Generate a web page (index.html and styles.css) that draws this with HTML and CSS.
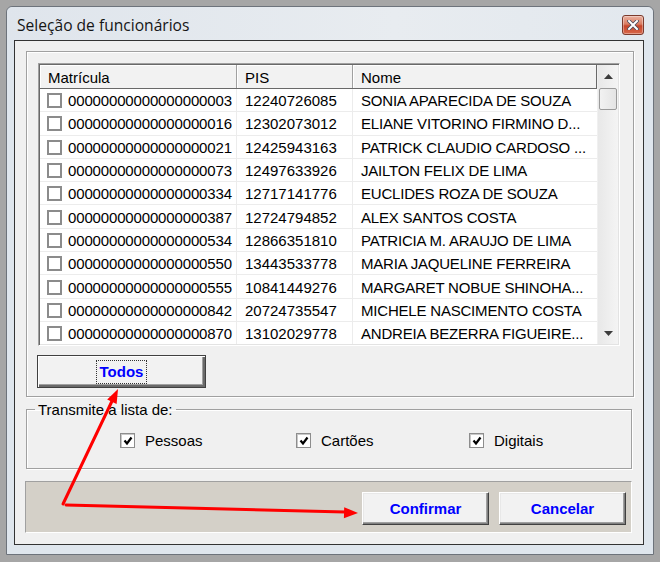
FILE: index.html
```html
<!DOCTYPE html>
<html lang="pt-BR">
<head>
<meta charset="utf-8">
<title>Seleção de funcionários</title>
<link rel="stylesheet" href="styles.css">
</head>
<body>
<div class="window">
  <div class="titlebar">
    <span class="title">Seleção de funcionários</span>
    <span class="close">
      <svg width="12" height="10" viewBox="0 0 12 10"><path d="M2 1 L10 9 M10 1 L2 9" stroke="#4a4a5a" stroke-width="3.6" stroke-linecap="square"/><path d="M2 1 L10 9 M10 1 L2 9" stroke="#ffffff" stroke-width="2" stroke-linecap="square"/></svg>
    </span>
  </div>
  <div class="client">
    <div class="group1">
      <div class="listview">
        <div class="list-main">
          <div class="lv-header">
            <div class="hcell c1">Matrícula</div>
            <div class="hcell c2">PIS</div>
            <div class="hcell c3">Nome</div>
          </div>
          <div class="row"><div class="cell c1"><span class="cb"></span>00000000000000000003</div><div class="cell c2">12240726085</div><div class="cell c3">SONIA APARECIDA DE SOUZA</div></div>
          <div class="row"><div class="cell c1"><span class="cb"></span>00000000000000000016</div><div class="cell c2">12302073012</div><div class="cell c3">ELIANE VITORINO FIRMINO D...</div></div>
          <div class="row"><div class="cell c1"><span class="cb"></span>00000000000000000021</div><div class="cell c2">12425943163</div><div class="cell c3">PATRICK CLAUDIO CARDOSO ...</div></div>
          <div class="row"><div class="cell c1"><span class="cb"></span>00000000000000000073</div><div class="cell c2">12497633926</div><div class="cell c3">JAILTON FELIX DE LIMA</div></div>
          <div class="row"><div class="cell c1"><span class="cb"></span>00000000000000000334</div><div class="cell c2">12717141776</div><div class="cell c3">EUCLIDES ROZA DE SOUZA</div></div>
          <div class="row"><div class="cell c1"><span class="cb"></span>00000000000000000387</div><div class="cell c2">12724794852</div><div class="cell c3">ALEX SANTOS COSTA</div></div>
          <div class="row"><div class="cell c1"><span class="cb"></span>00000000000000000534</div><div class="cell c2">12866351810</div><div class="cell c3">PATRICIA M. ARAUJO DE LIMA</div></div>
          <div class="row"><div class="cell c1"><span class="cb"></span>00000000000000000550</div><div class="cell c2">13443533778</div><div class="cell c3">MARIA JAQUELINE FERREIRA</div></div>
          <div class="row"><div class="cell c1"><span class="cb"></span>00000000000000000555</div><div class="cell c2">10841449276</div><div class="cell c3">MARGARET NOBUE SHINOHA...</div></div>
          <div class="row"><div class="cell c1"><span class="cb"></span>00000000000000000842</div><div class="cell c2">20724735547</div><div class="cell c3">MICHELE NASCIMENTO COSTA</div></div>
          <div class="row"><div class="cell c1"><span class="cb"></span>00000000000000000870</div><div class="cell c2">13102029778</div><div class="cell c3">ANDREIA BEZERRA FIGUEIRE...</div></div>
        </div>
        <div class="vscroll">
          <div class="sb-arrow"><svg width="9" height="5" viewBox="0 0 9 5"><path d="M0 5 L4.5 0 L9 5 Z" fill="#3c3c3c"/></svg></div>
          <div class="sb-thumb"></div>
          <div class="sb-track"></div>
          <div class="sb-arrow"><svg width="9" height="5" viewBox="0 0 9 5"><path d="M0 0 L4.5 5 L9 0 Z" fill="#3c3c3c"/></svg></div>
        </div>
      </div>
      <button class="btn btn-default"><span class="focus">Todos</span></button>
    </div>
    <fieldset class="group2">
      <legend>Transmite a lista de:</legend>
      <div class="checks">
        <label class="chk w1"><span class="cbox"><svg width="10" height="10" viewBox="0 0 10 10"><path d="M1.5 4.5 L4 7.5 L8.5 1.5" fill="none" stroke="#000" stroke-width="2.2"/></svg></span>Pessoas</label>
        <label class="chk w2"><span class="cbox"><svg width="10" height="10" viewBox="0 0 10 10"><path d="M1.5 4.5 L4 7.5 L8.5 1.5" fill="none" stroke="#000" stroke-width="2.2"/></svg></span>Cartões</label>
        <label class="chk"><span class="cbox"><svg width="10" height="10" viewBox="0 0 10 10"><path d="M1.5 4.5 L4 7.5 L8.5 1.5" fill="none" stroke="#000" stroke-width="2.2"/></svg></span>Digitais</label>
      </div>
    </fieldset>
    <div class="bottom">
      <button class="btn btn-act">Confirmar</button>
      <button class="btn btn-act">Cancelar</button>
    </div>
  </div>
</div>
<svg class="arrows" width="660" height="562" viewBox="0 0 660 562">
  <path d="M63 504 L113 399" stroke="#ff0000" stroke-width="3" fill="none" stroke-linecap="round"/>
  <polygon points="118,389 116.6,404 107.2,399.4" fill="#ff0000"/>
  <path d="M66 505 L345 512" stroke="#ff0000" stroke-width="3" fill="none" stroke-linecap="round"/>
  <polygon points="358,513 343.9,518.2 344.2,507.2" fill="#ff0000"/>
</svg>
</body>
</html>
```

FILE: styles.css
```css
* { box-sizing: border-box; }
html, body { margin: 0; padding: 0; }
body {
  width: 660px;
  height: 562px;
  background: #a6a6a6;
  position: relative;
  overflow: hidden;
  font-family: "Liberation Sans", Arial, sans-serif;
  font-size: 15px;
  color: #000;
}
.window {
  margin: 6px 0 0 6px;
  width: 648px;
  height: 549px;
  border: 1px solid #6d737b;
  border-radius: 6px 6px 0 0;
  background: #dfe6ed;
  padding: 0 8px 0 7px;
}
.titlebar {
  height: 33px;
  display: flex;
  align-items: center;
  justify-content: space-between;
  background: linear-gradient(to right, #dfe5ec 0%, #e8ecf0 60%, #e2e8ee 100%);
  margin: 0 -8px 0 -7px;
  padding-left: 10px;
  padding-right: 9px;
  border-radius: 6px 6px 0 0;
}
.title {
  font-family: "Open Sans", "Noto Sans", sans-serif;
  font-size: 15.6px;
  color: #151515;
  margin-top: 3px;
}
.close {
  width: 22px;
  height: 20px;
  border: 1px solid #7b3a2c;
  border-radius: 3px;
  background: linear-gradient(to bottom, #eab1a0 0%, #da7d62 45%, #c6452a 55%, #d8684a 100%);
  display: flex;
  align-items: center;
  justify-content: center;
  margin-top: 2px;
  box-shadow: inset 0 0 0 1px rgba(255,255,255,0.35);
}
.client {
  width: 630px;
  height: 505px;
  border: 1px solid #333;
  background: #f0f0f0;
  padding: 10px 9px 0 11px;
  display: flex;
  flex-direction: column;
}
.group1 {
  border: 1px solid #a0a0a0;
  box-shadow: inset 1px 1px 0 #fff, 1px 1px 0 #fff;
  padding: 11px 13px 8px 11px;
  display: flex;
  flex-direction: column;
  align-items: flex-start;
}
.listview {
  width: 582px;
  height: 283px;
  border: 1px solid #a0a0a0;
  border-right-color: #fff;
  border-bottom-color: #fff;
  box-shadow: inset 1px 1px 0 #696969, inset -1px -1px 0 #e3e3e3;
  padding: 1px;
  display: flex;
  background: #fff;
}
.list-main {
  flex: 1;
  overflow: hidden;
}
.lv-header {
  display: flex;
  height: 24px;
  background: #f2f2f2;
  border-bottom: 1px solid #696969;
}
.hcell {
  border-right: 1px solid #a0a0a0;
  box-shadow: inset 1px 1px 0 #fff;
  padding: 2px 0 0 8px;
  line-height: 21px;
  white-space: nowrap;
}
.hcell.c3 { border-right: 1px solid #696969; }
.c1 { width: 197px; flex: none; }
.c2 { width: 116px; flex: none; }
.c3 { flex: 1; }
.row {
  display: flex;
  height: 23.3px;
  border-bottom: 1px solid #ececec;
}
.cell {
  border-right: 1px solid #ececec;
  display: flex;
  align-items: center;
  white-space: nowrap;
  overflow: hidden;
  padding-left: 8px;
  padding-top: 1px;
}
.cell.c1 { padding-left: 7px; letter-spacing: -0.15px; }
.cell.c3 { letter-spacing: -0.2px; border-right: none; }
.cb {
  width: 15px;
  height: 15px;
  border: 2px solid #8b8b8b;
  background: #fff;
  margin-right: 6px;
  flex: none;
}
.vscroll {
  width: 21px;
  flex: none;
  display: flex;
  flex-direction: column;
  background: linear-gradient(to right, #e8e8e8, #f4f4f4);
  border-left: 1px solid #f0f0f0;
}
.sb-arrow {
  height: 22px;
  display: flex;
  align-items: center;
  justify-content: center;
}
.sb-thumb {
  height: 22px;
  margin: 1px 1px 0 1px;
  border: 1px solid #9a9a9a;
  border-radius: 2px;
  background: linear-gradient(to right, #f2f2f2, #e4e4e4);
}
.sb-track { flex: 1; }
.btn {
  font-family: "Liberation Sans", Arial, sans-serif;
  font-size: 15px;
  font-weight: bold;
  color: #0000ff;
  background: #f2f2f2;
  padding: 0;
  cursor: default;
}
.btn-default {
  margin-top: 9px;
  margin-left: -1px;
  width: 169px;
  height: 33px;
  border: 1px solid #404040;
  box-shadow: inset 1px 1px 0 #fff, inset -2px -2px 0 #6a6a6a, inset -3px -3px 0 #a0a0a0;
  display: flex;
  align-items: center;
  justify-content: center;
}
.focus {
  border: 1px dotted #333;
  padding: 2px 3px 3px 3px;
  line-height: 17px;
}
.group2 {
  margin: 4px 2px 0 0;
  padding: 0;
  border: 1px solid #a0a0a0;
  box-shadow: inset 1px 1px 0 #fff, 1px 1px 0 #fff;
  height: 68px;
  min-width: 0;
}
.group2 legend {
  margin-left: 8px;
  padding: 0 3px 0 3px;
  line-height: 17px;
}
.checks {
  display: flex;
  align-items: center;
  padding-left: 93px;
  padding-top: 14px;
}
.chk {
  display: flex;
  align-items: center;
  white-space: nowrap;
}
.chk.w1 { width: 176px; }
.chk.w2 { width: 173px; }
.cbox {
  width: 15px;
  height: 15px;
  border: 1px solid #8d8d8d;
  box-shadow: inset 1px 1px 0 #c8c8c8;
  background: #fff;
  margin-right: 10px;
  display: flex;
  align-items: center;
  justify-content: center;
}
.bottom {
  margin: 12px 2px 0 -1px;
  height: 52px;
  background: #d4d0c8;
  border: 1px solid #a0a0a0;
  border-right-color: #fff;
  border-bottom-color: #fff;
  display: flex;
  justify-content: flex-end;
  align-items: flex-start;
  gap: 10px;
  padding: 10px 5px 0 0;
}
.btn-act {
  width: 127px;
  height: 33px;
  border: 1px solid;
  border-color: #fff #404040 #404040 #fff;
  box-shadow: inset -1px -1px 0 #808080, inset -2px -2px 0 #a0a0a0, inset 1px 1px 0 #e8e8e8;
}
.arrows {
  position: absolute;
  left: 0;
  top: 0;
  pointer-events: none;
}
```
